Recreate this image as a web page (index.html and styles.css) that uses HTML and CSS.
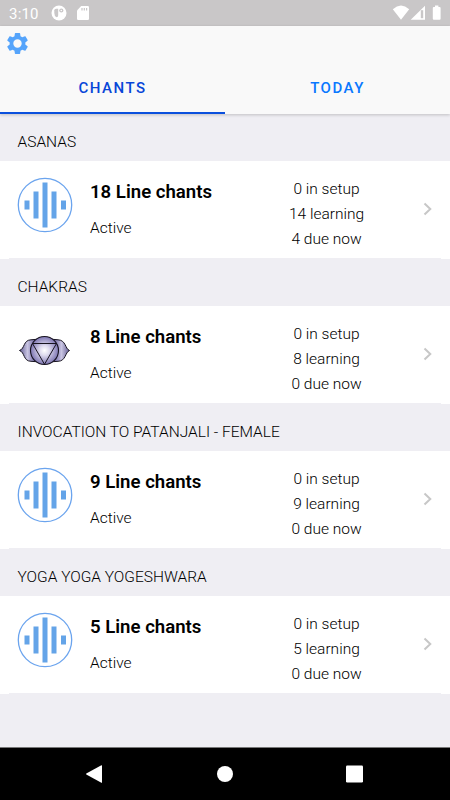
FILE: index.html
```html
<!DOCTYPE html>
<html lang="en">
<head>
  <meta charset="UTF-8" />
  <meta name="viewport" content="width=device-width, initial-scale=1.0"/>
  <title>Chants</title>
  <link rel="stylesheet" href="styles.css">
</head>
<body>

<!-- Shared icons -->
<svg class="sprite">
  <symbol id="wave" viewBox="0 0 56 56">
    <circle cx="28" cy="28" r="26.7" fill="none" stroke="#6ba4ee" stroke-width="1.3"/>
    <path fill="#64a4e8" d="M7.5 23.5h5v9h-5zM16.5 14.5h5v27h-5zM25.5 5.5h5v45h-5zM34.5 14.5h5v27h-5zM44 23.5h5v9h-5z"/>
  </symbol>
  <symbol id="chevron" viewBox="0 0 10 14">
    <path d="M1.5 1.5L7.3 7l-5.8 5.5" fill="none" stroke="#c7c7c7" stroke-width="2"/>
  </symbol>
</svg>

<div class="status-bar">
  <span class="time">3:10</span>
  <svg class="status-app" viewBox="0 0 16 16">
    <circle cx="8" cy="8" r="7.5" fill="#fff"/>
    <path fill="#c9c7c8" d="M7.2 3.7v6.6q0 2-1.7 2Q3.3 11 3.3 8V5.2Q3.4 3.7 5 3.7z"/>
    <circle cx="10.3" cy="5.5" r="2.1" fill="#c9c7c8"/>
    <circle cx="10.3" cy="5.5" r=".8" fill="#fff"/>
  </svg>
  <svg class="status-card" viewBox="0 0 12 14">
    <path fill="#fff" d="M4.2 0h6.5Q12 0 12 1.2v11.6q0 1.2-1.2 1.2H1.2Q0 14 0 12.8V4.5z"/>
    <path stroke="#c9c7c8" stroke-width="1.2" d="M5 2v2.5M7.3 2v2.5M9.6 2v2.5"/>
  </svg>
  <svg class="status-right" viewBox="0 0 50 16">
    <path fill="#fff" d="M.8 4.2Q9-3 17.2 4.2L9 14.8zM33 .8v14H18.7z"/>
    <path fill="#c9c7c8" d="M28.8 5.2h2.4v8h-2.4z"/>
    <path fill="#fff" d="M43 .6h3.4v1.4h1.2q1 0 1 1v10.8q0 1-1 1h-5.8q-1 0-1-1V3q0-1 1-1H43z"/>
  </svg>
</div>

<div class="header">
  <div class="toolbar">
    <svg class="gear" viewBox="2 2 20 20">
      <path fill="#55a4fb" d="M19.43 12.98c.04-.32.07-.64.07-.98s-.03-.66-.07-.98l2.11-1.65c.19-.15.24-.42.12-.64l-2-3.46c-.12-.22-.39-.3-.61-.22l-2.49 1c-.52-.4-1.08-.73-1.69-.98l-.38-2.65C14.46 2.18 14.25 2 14 2h-4c-.25 0-.46.18-.49.42l-.38 2.65c-.61.25-1.17.59-1.69.98l-2.49-1c-.23-.09-.49 0-.61.22l-2 3.46c-.13.22-.07.49.12.64l2.11 1.65c-.04.32-.07.65-.07.98s.03.66.07.98l-2.11 1.65c-.19.15-.24.42-.12.64l2 3.46c.12.22.39.3.61.22l2.49-1c.52.4 1.08.73 1.69.98l.38 2.65c.03.24.24.42.49.42h4c.25 0 .46-.18.49-.42l.38-2.65c.61-.25 1.17-.59 1.69-.98l2.49 1c.23.09.49 0 .61-.22l2-3.46c.12-.22.07-.49-.12-.64zM12 16a4 4 0 1 1 0-8 4 4 0 0 1 0 8z"/>
    </svg>
  </div>
  <div class="tabs">
    <div class="tab active">CHANTS</div>
    <div class="tab">TODAY</div>
  </div>
</div>

<div class="content">
  <h2 class="section-title">ASANAS</h2>
  <div class="row">
    <svg class="avatar"><use href="#wave"/></svg>
    <div class="info">
      <h3>18 Line chants</h3>
      <p>Active</p>
    </div>
    <div class="counts">
      <p>0 in setup</p>
      <p>14 learning</p>
      <p>4 due now</p>
    </div>
    <svg class="chevron"><use href="#chevron"/></svg>
  </div>

  <h2 class="section-title">CHAKRAS</h2>
  <div class="row">
    <svg class="avatar" viewBox="0 0 56 56">
      <defs>
        <radialGradient id="glow">
          <stop offset="0" stop-color="#fff"/>
          <stop offset=".35" stop-color="#dedbee"/>
          <stop offset="1" stop-color="#7d75b2"/>
        </radialGradient>
        <linearGradient id="petal">
          <stop offset="0" stop-color="#5f5890"/>
          <stop offset=".16" stop-color="#c9c5e2"/>
          <stop offset=".3" stop-color="#736ba8"/>
          <stop offset=".7" stop-color="#736ba8"/>
          <stop offset=".84" stop-color="#c9c5e2"/>
          <stop offset="1" stop-color="#5f5890"/>
        </linearGradient>
      </defs>
      <path fill="url(#petal)" stroke="#17131f" stroke-width="1" d="M2.5 28.5C8 26.8 6 18.1 14 17.8Q28 15.300 41 17.8C49 18.1 48 26.8 52.500 28.5C48 30.3 49 39.1 41 39.3Q28 41.3 14 39.3C6 39.1 8 30.3 2.500 28.5z"/>
      <circle cx="27.500" cy="28.5" r="14" fill="url(#glow)" stroke="#17131f" stroke-width="1.100"/>
      <path fill="none" stroke="#17131f" stroke-width="1" d="M15.500 21.500h24L27.500 42.300z"/>
    </svg>
    <div class="info">
      <h3>8 Line chants</h3>
      <p>Active</p>
    </div>
    <div class="counts">
      <p>0 in setup</p>
      <p>8 learning</p>
      <p>0 due now</p>
    </div>
    <svg class="chevron"><use href="#chevron"/></svg>
  </div>

  <h2 class="section-title">INVOCATION TO PATANJALI - FEMALE</h2>
  <div class="row">
    <svg class="avatar"><use href="#wave"/></svg>
    <div class="info">
      <h3>9 Line chants</h3>
      <p>Active</p>
    </div>
    <div class="counts">
      <p>0 in setup</p>
      <p>9 learning</p>
      <p>0 due now</p>
    </div>
    <svg class="chevron"><use href="#chevron"/></svg>
  </div>

  <h2 class="section-title">YOGA YOGA YOGESHWARA</h2>
  <div class="row">
    <svg class="avatar"><use href="#wave"/></svg>
    <div class="info">
      <h3>5 Line chants</h3>
      <p>Active</p>
    </div>
    <div class="counts">
      <p>0 in setup</p>
      <p>5 learning</p>
      <p>0 due now</p>
    </div>
    <svg class="chevron"><use href="#chevron"/></svg>
  </div>
</div>

<!-- Android navigation -->
<div class="nav-bar">
  <svg viewBox="0 0 20 20"><path fill="#fff" d="M17 1.5v17q0 .5-.6.2L1.3 10.4q-.6-.4 0-.8L16.4 1.3q.6-.3.6.2z"/></svg>
  <svg viewBox="0 0 20 20"><circle cx="10" cy="10" r="8" fill="#fff"/></svg>
  <svg viewBox="0 0 20 20"><rect x="1" y="1.5" width="17" height="17" rx="1.2" fill="#fff"/></svg>
</div>

</body>
</html>
```
FILE: styles.css
```css
* {
  margin: 0;
  padding: 0;
  box-sizing: border-box;
}

body {
  display: flex;
  flex-direction: column;
  height: 100vh;
  font-family: Roboto, sans-serif;
  font-size: 15.5px;
  color: #000;
  background: #efeef3;
  overflow: hidden;
}

svg {
  display: block;
  flex: none;
}

.sprite {
  position: absolute;
  width: 0;
  height: 0;
}

.status-bar {
  height: 26px;
  display: flex;
  align-items: center;
  padding: 0 8px 0 9px;
  background: #c9c7c8;
  color: #fff;
}

.time {
  width: 42px;
  padding-top: 1px;
  font-size: 15px;
  letter-spacing: 0.2px;
}

.status-app {
  width: 16px;
  height: 16px;
}

.status-card {
  width: 12px;
  height: 14px;
  margin-left: 10px;
}

.status-right {
  width: 50px;
  height: 16px;
  margin-left: auto;
}

.header {
  height: 88px;
  background: #f9f9f9;
  box-shadow: 0 1px 3px rgba(0, 0, 0, 0.2);
  z-index: 1;
}

.toolbar {
  height: 36px;
  padding: 7px;
}

.gear {
  width: 21px;
  height: 21px;
}

.tabs {
  display: flex;
  height: 52px;
}

.tab {
  flex: 1;
  border-bottom: 2px solid transparent;
  text-align: center;
  line-height: 52px;
  font-size: 15px;
  font-weight: 500;
  letter-spacing: 1.5px;
  color: #0a78ff;
}

.tab.active {
  color: #0846d8;
  border-color: #0b50dd;
}

.content {
  flex: 1;
}

.section-title {
  height: 47px;
  padding: 10px 17.5px 0;
  font-size: 15.5px;
  font-weight: 300;
  line-height: 37px;
}

.row {
  position: relative;
  height: 98px;
  display: flex;
  padding: 0 17px;
  background: #fff;
}

/* inset separator */
.row::after {
  content: "";
  position: absolute;
  left: 9px;
  right: 9px;
  bottom: 0;
  height: 1.5px;
  background: #efeef3;
}

.avatar {
  width: 56px;
  height: 56px;
  margin-top: 16px;
}

.info {
  width: 164px;
  margin-left: 17px;
  padding-top: 19px;
}

.info h3 {
  font-size: 18.6px;
  font-weight: 600;
  line-height: 24px;
}

.info p {
  margin-top: 12px;
  line-height: 24px;
  font-weight: 300;
}

.counts {
  width: 145px;
  padding-top: 16px;
  text-align: center;
  font-weight: 300;
  line-height: 25px;
}

.chevron {
  width: 10px;
  height: 14px;
  margin: 41px 0 0 auto;
}

.nav-bar {
  height: 53px;
  display: flex;
  align-items: center;
  justify-content: space-between;
  padding: 0 85px;
  background: #000;
  border-top: 1px solid #777;
}

.nav-bar svg {
  width: 20px;
  height: 20px;
}
```
